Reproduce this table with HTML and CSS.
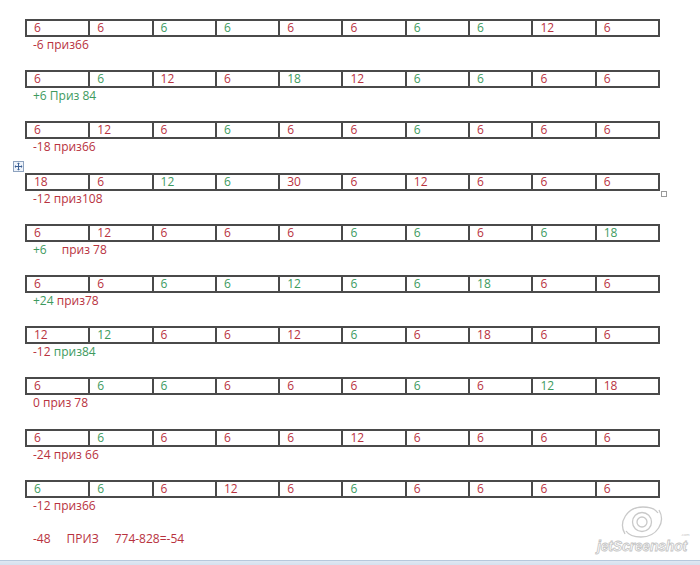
FILE: index.html
```html
<!DOCTYPE html>
<html lang="ru">
<head>
    <meta charset="UTF-8">
    <title>приз</title>
    <link rel="stylesheet" href="styles.css">
</head>
<body>

    <div class="page">
        <!-- 1 -->
        <div class="block">
            <table class="grid"><tr>
                <td class="r">6</td><td class="r">6</td><td class="g">6</td><td class="g">6</td><td class="r">6</td>
                <td class="r">6</td><td class="g">6</td><td class="g">6</td><td class="r">12</td><td class="r">6</td>
            </tr></table>
            <p class="note r">-6 приз66</p>
        </div>

        <!-- 2 -->
        <div class="block">
            <table class="grid"><tr>
                <td class="r">6</td><td class="g">6</td><td class="r">12</td><td class="r">6</td><td class="g">18</td>
                <td class="r">12</td><td class="g">6</td><td class="g">6</td><td class="r">6</td><td class="r">6</td>
            </tr></table>
            <p class="note g">+6 Приз 84</p>
        </div>

        <!-- 3 -->
        <div class="block">
            <table class="grid"><tr>
                <td class="r">6</td><td class="r">12</td><td class="r">6</td><td class="g">6</td><td class="r">6</td>
                <td class="r">6</td><td class="g">6</td><td class="r">6</td><td class="r">6</td><td class="r">6</td>
            </tr></table>
            <p class="note r">-18 приз66</p>
        </div>

        <!-- 4 -->
        <div class="block">
            <span class="move-handle">
                <svg width="11" height="11" viewBox="0 0 11 11">
                    <rect x="0.5" y="0.5" width="10" height="10" fill="#eef3fa" stroke="#8ea3bf"/>
                    <path d="M5.5 2v7M2 5.5h7" stroke="#3b5f93" stroke-width="1"/>
                    <path d="M5.5 1.5l-1.5 1.5h3zM5.5 9.5l-1.5-1.5h3zM1.5 5.5l1.5-1.5v3zM9.5 5.5l-1.5-1.5v3z" fill="#3b5f93"/>
                </svg>
            </span>
            <table class="grid"><tr>
                <td class="r">18</td><td class="r">6</td><td class="g">12</td><td class="g">6</td><td class="r">30</td>
                <td class="r">6</td><td class="r">12</td><td class="r">6</td><td class="r">6</td><td class="r">6</td>
            </tr></table>
            <span class="resize-handle"></span>
            <p class="note r">-12 приз108</p>
        </div>

        <!-- 5 -->
        <div class="block">
            <table class="grid"><tr>
                <td class="r">6</td><td class="r">12</td><td class="r">6</td><td class="r">6</td><td class="r">6</td>
                <td class="g">6</td><td class="g">6</td><td class="r">6</td><td class="g">6</td><td class="g">18</td>
            </tr></table>
            <p class="note"><span class="g">+6</span><span class="gap"></span><span class="r">приз 78</span></p>
        </div>

        <!-- 6 -->
        <div class="block">
            <table class="grid"><tr>
                <td class="r">6</td><td class="r">6</td><td class="g">6</td><td class="g">6</td><td class="g">12</td>
                <td class="g">6</td><td class="g">6</td><td class="g">18</td><td class="r">6</td><td class="r">6</td>
            </tr></table>
            <p class="note"><span class="g">+24</span> <span class="r">приз78</span></p>
        </div>

        <!-- 7 -->
        <div class="block">
            <table class="grid"><tr>
                <td class="r">12</td><td class="g">12</td><td class="r">6</td><td class="r">6</td><td class="r">12</td>
                <td class="g">6</td><td class="r">6</td><td class="r">18</td><td class="r">6</td><td class="r">6</td>
            </tr></table>
            <p class="note"><span class="r">-12</span> <span class="g">приз84</span></p>
        </div>

        <!-- 8 -->
        <div class="block">
            <table class="grid"><tr>
                <td class="r">6</td><td class="g">6</td><td class="g">6</td><td class="r">6</td><td class="r">6</td>
                <td class="r">6</td><td class="g">6</td><td class="r">6</td><td class="g">12</td><td class="r">18</td>
            </tr></table>
            <p class="note r">0 приз 78</p>
        </div>

        <!-- 9 -->
        <div class="block">
            <table class="grid"><tr>
                <td class="r">6</td><td class="g">6</td><td class="r">6</td><td class="r">6</td><td class="r">6</td>
                <td class="r">12</td><td class="r">6</td><td class="r">6</td><td class="r">6</td><td class="r">6</td>
            </tr></table>
            <p class="note r">-24 приз 66</p>
        </div>

        <!-- 10 -->
        <div class="block">
            <table class="grid"><tr>
                <td class="g">6</td><td class="g">6</td><td class="r">6</td><td class="r">12</td><td class="r">6</td>
                <td class="g">6</td><td class="r">6</td><td class="r">6</td><td class="r">6</td><td class="r">6</td>
            </tr></table>
            <p class="note r">-12 приз66</p>
        </div>

        <p class="total r"><span>-48</span><span>ПРИЗ</span><span>774-828=-54</span></p>
    </div>

    <!-- водяной знак -->
    <div class="watermark">
        <svg width="100" height="54" viewBox="0 0 100 54">
            <g fill="none" stroke="#c9c9c9" stroke-width="1.3">
                <circle cx="48" cy="19" r="5"/>
                <circle cx="48" cy="19" r="9.5"/>
                <path d="M31 31c-7-12 2-27 18-27 8 0 13 3 15 6"/>
                <path d="M65 7c7 12-2 27-18 27-8 0-13-3-15-6"/>
            </g>
            <text x="87" y="33" class="wm-com">.com</text>
            <text x="3" y="48" class="wm-text">jetScreenshot</text>
        </svg>
    </div>

    <div class="statusbar"></div>

</body>
</html>
```

FILE: styles.css
```css
/* страница */
body {
    margin: 0;
    background: #fff;
    font-family: "Open Sans", "Liberation Sans", sans-serif;
    font-size: 12px;
    overflow: hidden;
}
.page {
    padding: 19px 0 0 25px;
}
.block {
    position: relative;
    height: 51.2px;
}
.grid {
    border-collapse: collapse;
    width: 635px;
    table-layout: fixed;
}
.grid td {
    border: 2px solid #4a4a4a;
    height: 14px;
    padding: 0 0 0 7px;
    line-height: 14px;
}
.note {
    margin: 0;
    padding-left: 8px;
    line-height: 16px;
}
.gap {
    display: inline-block;
    width: 15px;
}
.total {
    margin: 0;
    padding-left: 8px;
    line-height: 16px;
}
.total span {
    margin-right: 16px;
}
.r { color: #b8323e; }
.g { color: #3d9a5e; }

/* метки таблицы */
.move-handle {
    position: absolute;
    left: -12px;
    top: -12px;
    width: 11px;
    height: 11px;
}
.move-handle svg {
    display: block;
}
.resize-handle {
    position: absolute;
    left: 636px;
    top: 18px;
    width: 4px;
    height: 4px;
    border: 1px solid #9a9a9a;
    background: #fff;
}

/* водяной знак */
.watermark {
    position: absolute;
    left: 594px;
    top: 503px;
}
.watermark svg {
    display: block;
}
.wm-text {
    font-family: "Liberation Sans", sans-serif;
    font-size: 14px;
    font-style: italic;
    font-weight: bold;
    letter-spacing: -0.2px;
    fill: #fff;
    stroke: #c4c4c4;
    stroke-width: 0.8;
}
.wm-com {
    font-family: "Liberation Sans", sans-serif;
    font-size: 4px;
    fill: #c4c4c4;
}
.statusbar {
    position: absolute;
    left: 0;
    right: 0;
    top: 560px;
    height: 5px;
    background: linear-gradient(#dfe8f3, #d2deec);
    border-top: 1px solid #b7c8dc;
}
```
